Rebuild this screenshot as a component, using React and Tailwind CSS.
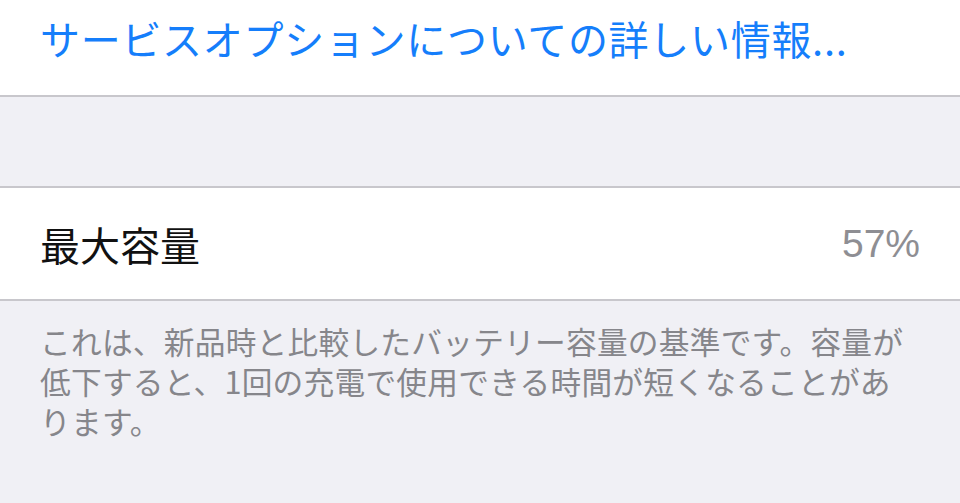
export default function App() {
  const jp = { fontFamily: '"Noto Sans CJK JP", "Noto Sans", sans-serif' };
  return (
    <div className="w-[960px] h-[503px] bg-[#f0f0f5] overflow-hidden" style={jp}>
      <div className="bg-white h-[97px] border-b-2 border-[#c8c7cc] pl-10 pt-[18px]">
        <div className="text-[40px] leading-[40px] tracking-[0.7px] text-[#157efb] whitespace-nowrap">
          サービスオプションについての詳しい情報...
        </div>
      </div>
      <div className="h-[89px]" />
      <div className="bg-white h-[115px] border-y-2 border-[#c8c7cc] flex items-center justify-between px-10">
        <span className="text-[40px] leading-[40px] text-[#111]">最大容量</span>
        <span
          className="text-[39px] leading-[40px] text-[#8e8e93]"
          style={{ fontFamily: '"Liberation Sans", Arial, sans-serif' }}
        >
          57%
        </span>
      </div>
      <div className="pl-10 pt-[20px] text-[30.7px] leading-[40px] tracking-[0.25px] text-[#86868b] whitespace-nowrap">
        <div>これは、新品時と比較したバッテリー容量の基準です。容量が</div>
        <div>低下すると、1回の充電で使用できる時間が短くなることがあ</div>
        <div>ります。</div>
      </div>
    </div>
  );
}
